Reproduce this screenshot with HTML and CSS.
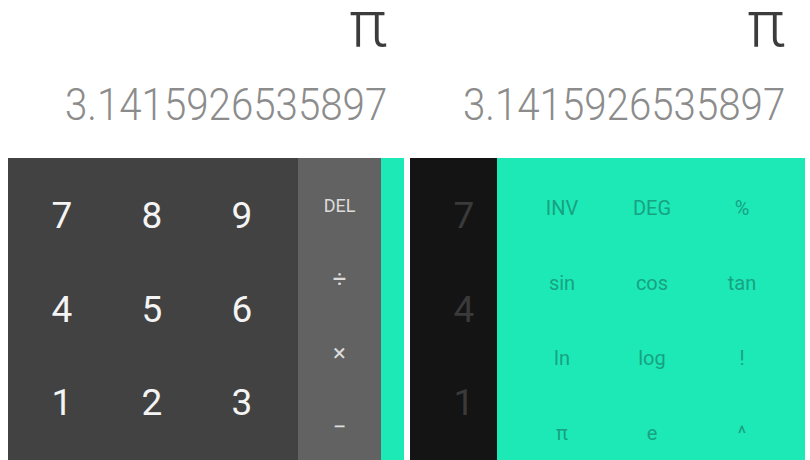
FILE: index.html
```html
<!DOCTYPE html>
<html>
<head>
<meta charset="utf-8">
<link rel="stylesheet" href="styles.css">
</head>
<body>
<div class="screen">
  <div class="phone">
    <div class="display">
      <div class="formula">π</div>
      <div class="result"><span class="sq">3.1415926535897</span></div>
    </div>
    <div class="pad">
      <div class="nums">
        <div class="key">7</div>
        <div class="key">8</div>
        <div class="key">9</div>
        <div class="key">4</div>
        <div class="key">5</div>
        <div class="key">6</div>
        <div class="key">1</div>
        <div class="key">2</div>
        <div class="key">3</div>
      </div>
      <div class="ops">
        <div class="op del">DEL</div>
        <div class="op">÷</div>
        <div class="op">×</div>
        <div class="op">−</div>
      </div>
      <div class="strip"></div>
    </div>
  </div>
  <div class="phone phone-right">
    <div class="display">
      <div class="formula">π</div>
      <div class="result"><span class="sq">3.1415926535897</span></div>
    </div>
    <div class="pad">
      <div class="nums nums-dim">
        <div class="key">7</div>
        <div class="key">4</div>
        <div class="key">1</div>
      </div>
      <div class="adv">
        <div class="fn">INV</div>
        <div class="fn">DEG</div>
        <div class="fn">%</div>
        <div class="fn">sin</div>
        <div class="fn">cos</div>
        <div class="fn">tan</div>
        <div class="fn">ln</div>
        <div class="fn">log</div>
        <div class="fn">!</div>
        <div class="fn">π</div>
        <div class="fn">e</div>
        <div class="fn">^</div>
      </div>
    </div>
  </div>
</div>
</body>
</html>
```
FILE: styles.css
```css
html, body {
  margin: 0;
  padding: 0;
  background: #ffffff;
}
body {
  font-family: Roboto, "Liberation Sans", sans-serif;
}
.screen {
  width: 810px;
  height: 460px;
  overflow: hidden;
  display: flex;
  gap: 6px;
  padding-left: 8px;
  box-sizing: border-box;
}
.phone {
  width: 396px;
  flex: none;
  display: flex;
  flex-direction: column;
}
.phone-right {
  width: 395px;
}
.display {
  height: 158px;
  flex: none;
  box-sizing: border-box;
  display: flex;
  flex-direction: column;
  align-items: flex-end;
  padding-right: 17px;
}
.phone-right .display {
  padding-right: 20px;
}
.formula {
  font-weight: 300;
  font-size: 64px;
  line-height: 50px;
  color: #3c3c3c;
}
.result {
  font-weight: 300;
  font-size: 44px;
  line-height: 60px;
  color: #8c8c8c;
  margin-top: 25px;
}
.sq {
  display: inline-block;
  transform: scaleX(0.915);
  transform-origin: right center;
}
.pad {
  flex: 1;
  display: flex;
  box-shadow: inset 0 1px 2px rgba(0,0,0,0.2);
}
.nums {
  width: 290px;
  flex: none;
  background: #424242;
  box-sizing: border-box;
  padding: 11px 0 0 9px;
  display: grid;
  grid-template-columns: repeat(3, 90px);
  grid-auto-rows: 93.5px;
  align-content: start;
}
.key {
  display: flex;
  align-items: center;
  justify-content: center;
  font-size: 37px;
  color: #f4f4f4;
}
.nums-dim {
  width: 87px;
  background: #141414;
  grid-template-columns: 90px;
}
.nums-dim .key {
  color: #3a3a3a;
}
.ops {
  width: 83px;
  flex: none;
  background: #626262;
  box-sizing: border-box;
  padding-top: 10px;
  display: grid;
  grid-auto-rows: 74px;
  align-content: start;
}
.op {
  display: flex;
  align-items: center;
  justify-content: center;
  font-size: 24px;
  color: #dcdcdc;
}
.op.del {
  font-size: 18px;
}
.strip {
  flex: 1;
  background: #1de9b6;
}
.adv {
  flex: 1;
  background: #1de9b6;
  box-sizing: border-box;
  padding: 12.5px 0 0 20px;
  display: grid;
  grid-template-columns: repeat(3, 90px);
  grid-auto-rows: 75px;
  align-content: start;
}
.fn {
  display: flex;
  align-items: center;
  justify-content: center;
  font-size: 20px;
  color: #17a282;
}
```
